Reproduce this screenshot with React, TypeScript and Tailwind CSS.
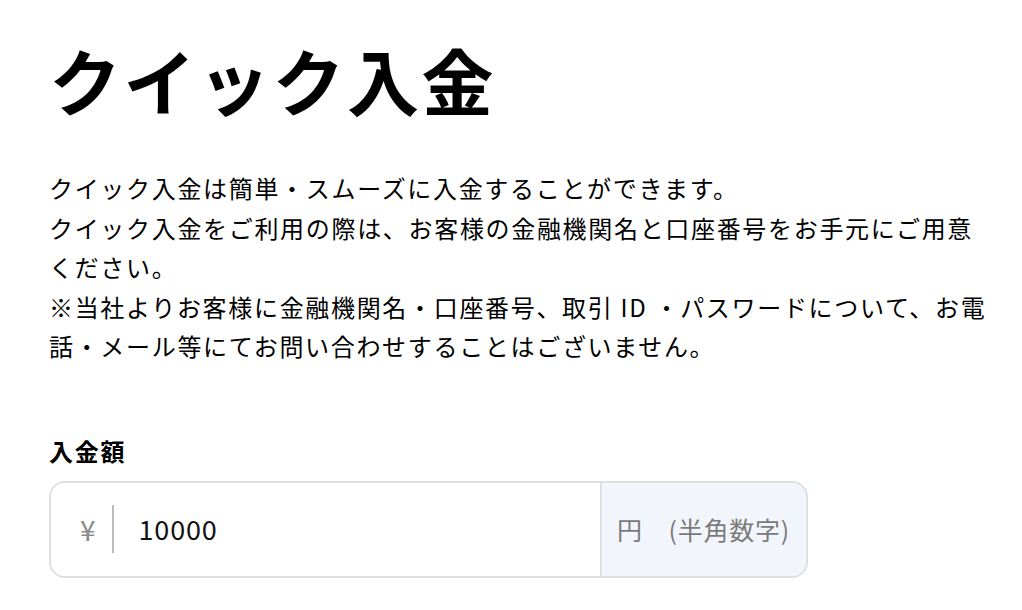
const font = { fontFamily: '"Noto Sans CJK JP", "Noto Sans", sans-serif' }

function App() {
  return (
    <main className="min-h-dvh bg-white pl-[49px] pt-[29px] text-black" style={font}>
      <h1 className="text-[72px] leading-[100px] font-bold tracking-[0.035em]">クイック入金</h1>

      <div className="mt-[39px] max-w-[946px] text-[24px] leading-[39.6px] tracking-[0.07em]">
        <p>クイック入金は簡単・スムーズに入金することができます。</p>
        <p>クイック入金をご利用の際は、お客様の金融機関名と口座番号をお手元にご用意ください。</p>
        <p>
          ※当社よりお客様に金融機関名・口座番号、取引 ID ・パスワードについて、お電話・メール等にてお問い合わせすることはございません。
        </p>
      </div>

      <section className="mt-[67px]">
        <label className="block text-[24px] leading-[36px] font-bold tracking-[0.075em]">入金額</label>
        <div className="mt-[12px] flex h-[97px] w-[759px] overflow-hidden rounded-[16px] border-2 border-[#dedfe1]">
          <div className="flex flex-1 items-center bg-white pl-[29px]">
            <span className="text-[28px] text-[#8a8a8a]">¥</span>
            <span className="ml-[16px] h-[48px] w-[2px] bg-[#bdbdbd]" />
            <span className="ml-[25px] text-[27px] tracking-[0.03em] text-[#111]">10000</span>
          </div>
          <div className="flex w-[206px] items-center border-l-2 border-[#dedfe1] bg-[#f2f6fc] pl-[15px] text-[25px] tracking-[0.03em] text-[#7a7a7a]">
            円　(半角数字)
          </div>
        </div>
      </section>
    </main>
  )
}

export default App
